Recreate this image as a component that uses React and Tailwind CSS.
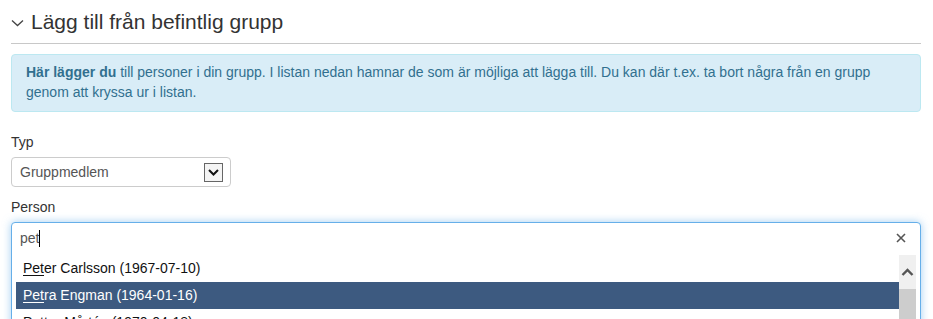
import React from "react";

const font = { fontFamily: '"Liberation Sans", Arial, sans-serif' };

function Row({ match, rest, active }) {
  return (
    <div
      className={
        "h-[27px] leading-[27px] pl-[7px] text-[14px] whitespace-nowrap " +
        (active ? "bg-[#3d5a80] text-white" : "text-[#111]")
      }
    >
      <span className="underline underline-offset-[2px]">{match}</span>
      {rest}
    </div>
  );
}

export default function App() {
  return (
    <div
      className="w-[933px] h-[319px] overflow-hidden bg-white pl-[11px] pr-[12px]"
      style={font}
    >
      {/* Heading */}
      <div className="h-[44px] flex items-center border-b border-[#c8c8c8]">
        <svg width="13" height="8" viewBox="0 0 13 8" className="mt-[2px]">
          <path d="M1 1.5 L6.5 6.5 L12 1.5" fill="none" stroke="#444" strokeWidth="1.3" />
        </svg>
        <h2 className="ml-[7px] text-[21px] leading-[28px] text-[#333] font-normal">
          Lägg till från befintlig grupp
        </h2>
      </div>

      {/* Alert */}
      <div className="mt-[10px] rounded-[4px] border border-[#bce8f1] bg-[#d9edf7] px-[14px] pt-[7px] pb-[9px] text-[14px] leading-[20px] text-[#31708f]">
        <b>Här lägger du</b> till personer i din grupp. I listan nedan hamnar de som är möjliga att lägga till. Du kan där t.ex. ta bort några från en grupp genom att kryssa ur i listan.
      </div>

      {/* Typ */}
      <div className="mt-[20px] text-[14px] leading-[20px] text-[#333]">Typ</div>
      <div className="mt-[5px] w-[220px] h-[30px] rounded-[4px] border border-[#ccc] flex items-center justify-between pl-[8px] pr-[7px]">
        <span className="text-[14px] text-[#555]">Gruppmedlem</span>
        <span className="w-[19px] h-[19px] border border-[#666] bg-[#f4f4f4] flex items-center justify-center">
          <svg width="11" height="7" viewBox="0 0 11 7">
            <path d="M1 1 L5.5 5.5 L10 1" fill="none" stroke="#111" strokeWidth="2" />
          </svg>
        </span>
      </div>

      {/* Person */}
      <div className="mt-[10px] text-[14px] leading-[20px] text-[#333]">Person</div>
      <div className="mt-[5px] h-[120px] rounded-[4px] border border-[#66afe9] shadow-[0_0_8px_rgba(102,175,233,0.6)] bg-white">
        <div className="h-[32px] flex items-start justify-between pl-[8px] pr-[14px] pt-[5px]">
          <span className="text-[14px] leading-[20px] text-[#555] flex items-center">
            pet<span className="inline-block w-px h-[17px] bg-black" />
          </span>
          <svg width="10" height="10" viewBox="0 0 10 10" className="mt-[5px]">
            <path d="M1 1 L9 9 M9 1 L1 9" stroke="#555" strokeWidth="1.6" />
          </svg>
        </div>
        <div className="mx-[4px] flex">
          <div className="flex-1">
            <Row match="Pet" rest="er Carlsson (1967-07-10)" />
            <Row match="Pet" rest="ra Engman (1964-01-16)" active />
            <Row match="Pet" rest="ter Mårtén (1970-04-18)" />
          </div>
          <div className="w-[17px] bg-[#f0f0f0] flex flex-col">
            <div className="h-[34px] flex items-center justify-center">
              <svg width="13" height="8" viewBox="0 0 13 8">
                <path d="M1.5 7 L6.5 2 L11.5 7" fill="none" stroke="#555" strokeWidth="2.4" />
              </svg>
            </div>
            <div className="flex-1 bg-[#cdcdcd]" />
          </div>
        </div>
      </div>
    </div>
  );
}
